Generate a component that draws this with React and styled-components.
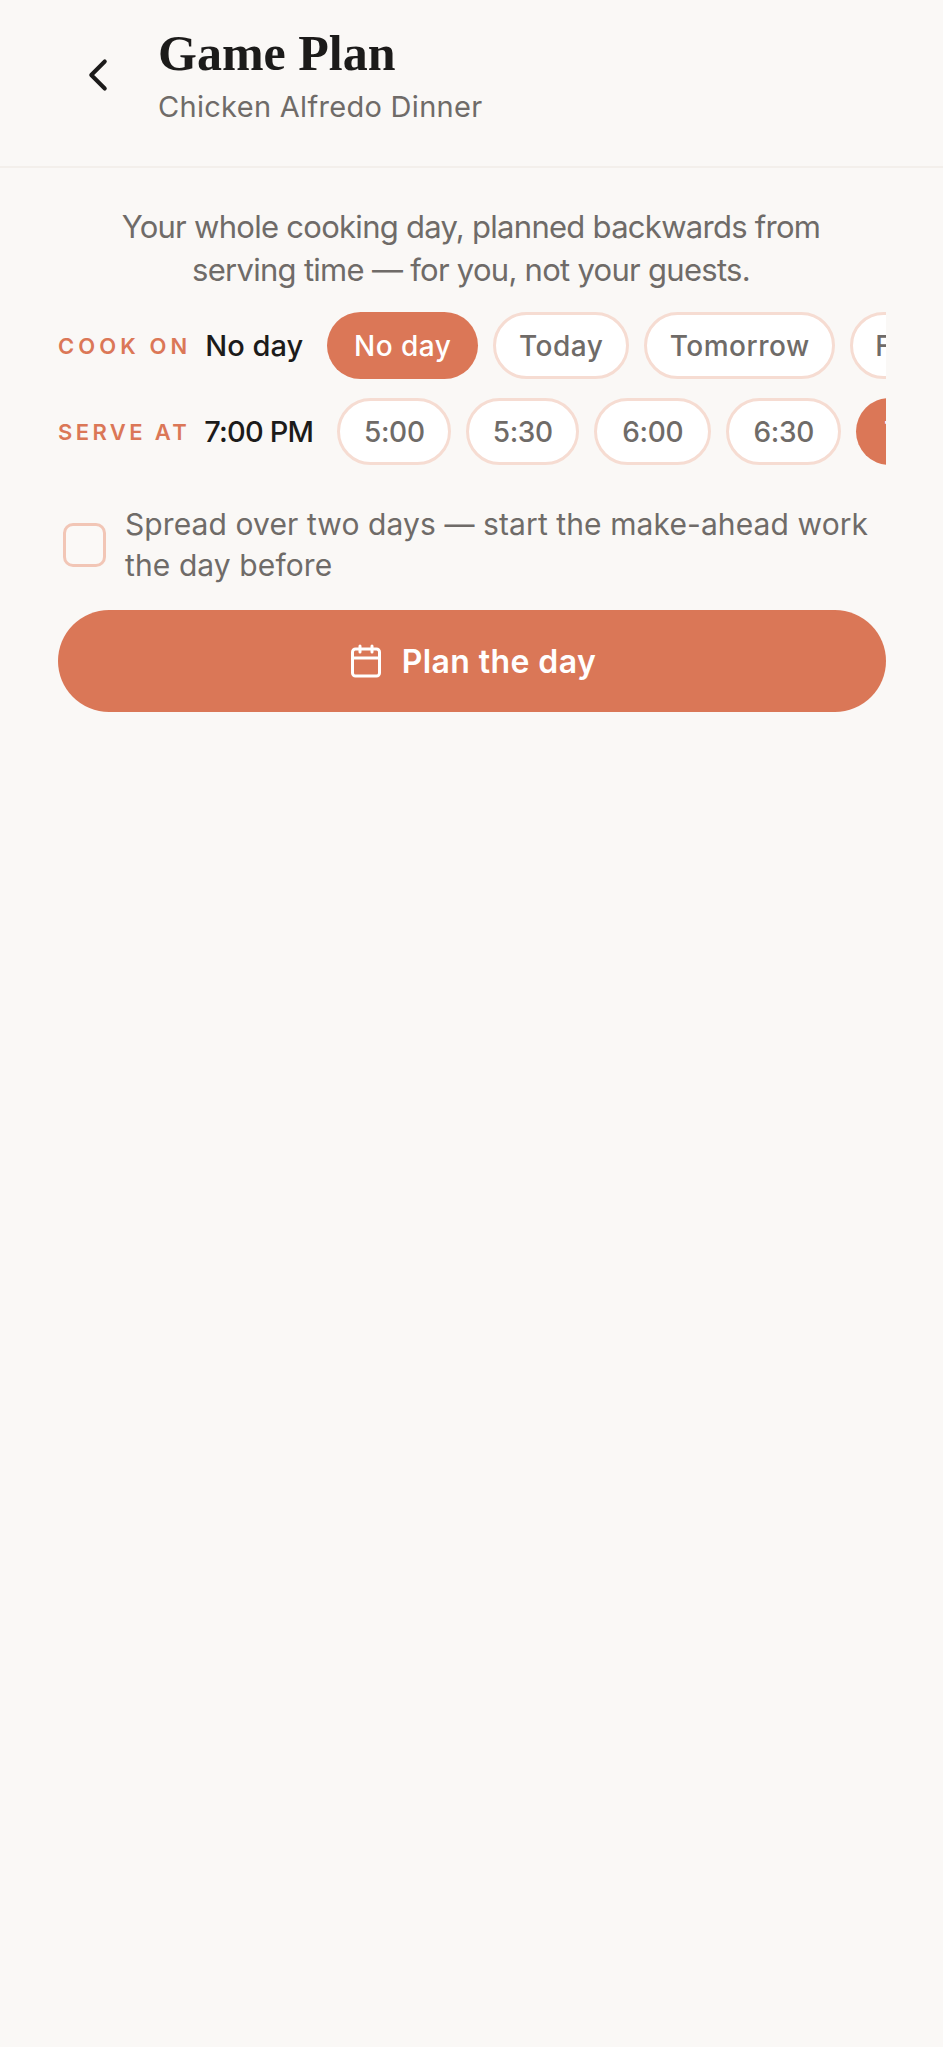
import React from 'react';
import styled, { createGlobalStyle } from 'styled-components';
import { ChevronLeft, Calendar } from 'lucide-react';

const GlobalStyle = createGlobalStyle`
    html, body {
        margin: 0;
        padding: 0;
        background: #faf8f6;
    }
    * {
        box-sizing: border-box;
    }
`;

const sans = `Inter, "Liberation Sans", sans-serif`;

const Page = styled.div`
    width: 943px;
    height: 2047px;
    overflow: hidden;
    background: #faf8f6;
    font-family: ${sans};
    color: #1c1b1a;
`;

const Header = styled.header`
    height: 168px;
    display: flex;
    align-items: flex-start;
    gap: 33px;
    padding: 22px 0 0 71px;
    border-bottom: 2px solid #f3efeb;
`;

const BackButton = styled.div`
    display: flex;
    margin-top: 26px;
    color: #1c1b1a;
`;

const Titles = styled.div`
    display: flex;
    flex-direction: column;
`;

const Title = styled.h1`
    margin: 0;
    font-family: "Liberation Serif", serif;
    font-weight: 700;
    font-size: 50px;
    line-height: 62px;
    color: #1c1b1a;
`;

const Subtitle = styled.div`
    margin-top: 3px;
    font-size: 29px;
    line-height: 40px;
    letter-spacing: 0.3px;
    color: #6f6b68;
`;

const Body = styled.main`
    padding: 37px 57px 0 58px;
`;

const Intro = styled.p`
    margin: 0 0 21px;
    padding-right: 2px;
    text-align: center;
    font-size: 31px;
    line-height: 43px;
    letter-spacing: -0.72px;
    color: #6f6b68;
`;

const Row = styled.div`
    display: flex;
    align-items: center;
    height: 67px;
    margin-bottom: 19px;
`;

const RowLabel = styled.span`
    flex: none;
    font-size: 22px;
    font-weight: 600;
    letter-spacing: ${props => props.$spacing}px;
    color: #db7757;
    white-space: nowrap;
`;

const RowValue = styled.span`
    flex: none;
    margin-left: ${props => props.$offset}px;
    margin-right: ${props => props.$after}px;
    font-size: 29px;
    font-weight: 500;
    letter-spacing: ${props => props.$spacing}px;
    color: #1c1b1a;
    white-space: nowrap;
`;

const PillScroller = styled.div`
    flex: 1;
    min-width: 0;
    display: flex;
    gap: 15px;
    overflow: hidden;
`;

const Pill = styled.div`
    flex: none;
    width: ${props => props.$width}px;
    height: 67px;
    display: flex;
    align-items: center;
    justify-content: center;
    border-radius: 34px;
    border: ${props => (props.$active ? 'none' : '3px solid #f6dcd2')};
    background: ${props => (props.$active ? '#db7757' : '#ffffff')};
    color: ${props => (props.$active ? '#ffffff' : '#6f6b68')};
    font-size: 28px;
    font-weight: 500;
    letter-spacing: ${props => props.$spacing}px;
    white-space: nowrap;
`;

const SpreadRow = styled.label`
    display: flex;
    align-items: center;
    gap: 19px;
    margin-top: 39px;
    padding-left: 5px;
`;

const Checkbox = styled.span`
    flex: none;
    width: 43px;
    height: 44px;
    border-radius: 10px;
    border: 3px solid #f2c6b6;
    background: #fbf9f7;
`;

const SpreadText = styled.span`
    font-size: 30px;
    line-height: 41px;
    letter-spacing: 0.1px;
    color: #6f6b68;
`;

const PlanButton = styled.button`
    width: 100%;
    height: 102px;
    margin-top: 24px;
    display: flex;
    align-items: center;
    justify-content: center;
    gap: 18px;
    border: none;
    border-radius: 51px;
    background: #da7757;
    color: #ffffff;
    font-family: ${sans};
    font-size: 32px;
    font-weight: 600;
    letter-spacing: 0.4px;
`;

const dayPills = [
    { label: 'No day', width: 151, active: true },
    { label: 'Today', width: 136 },
    { label: 'Tomorrow', width: 191 },
    { label: 'Friday', width: 136 },
];

const timePills = [
    { label: '5:00', width: 114 },
    { label: '5:30', width: 113 },
    { label: '6:00', width: 117 },
    { label: '6:30', width: 115 },
    { label: '7:00', width: 114, active: true },
];

export default function App() {
    return (
        <Page>
            <GlobalStyle />
            <Header>
                <BackButton>
                    <ChevronLeft size={54} strokeWidth={1.8} />
                </BackButton>
                <Titles>
                    <Title>Game Plan</Title>
                    <Subtitle>Chicken Alfredo Dinner</Subtitle>
                </Titles>
            </Header>
            <Body>
                <Intro>
                    Your whole cooking day, planned backwards from
                    <br />
                    serving time — for you, not your guests.
                </Intro>
                <Row>
                    <RowLabel $spacing={4.1}>COOK ON</RowLabel>
                    <RowValue $offset={14} $after={24} $spacing={0}>No day</RowValue>
                    <PillScroller>
                        {dayPills.map(pill => (
                            <Pill key={pill.label} $width={pill.width} $active={pill.active} $spacing={0.5}>{pill.label}</Pill>
                        ))}
                    </PillScroller>
                </Row>
                <Row>
                    <RowLabel $spacing={3.4}>SERVE AT</RowLabel>
                    <RowValue $offset={14} $after={24} $spacing={-0.8}>7:00 PM</RowValue>
                    <PillScroller>
                        {timePills.map(pill => (
                            <Pill key={pill.label} $width={pill.width} $active={pill.active} $spacing={-0.3}>{pill.label}</Pill>
                        ))}
                    </PillScroller>
                </Row>
                <SpreadRow>
                    <Checkbox />
                    <SpreadText>Spread over two days — start the make-ahead work the day before</SpreadText>
                </SpreadRow>
                <PlanButton>
                    <Calendar size={36} strokeWidth={2} />
                    Plan the day
                </PlanButton>
            </Body>
        </Page>
    );
}
